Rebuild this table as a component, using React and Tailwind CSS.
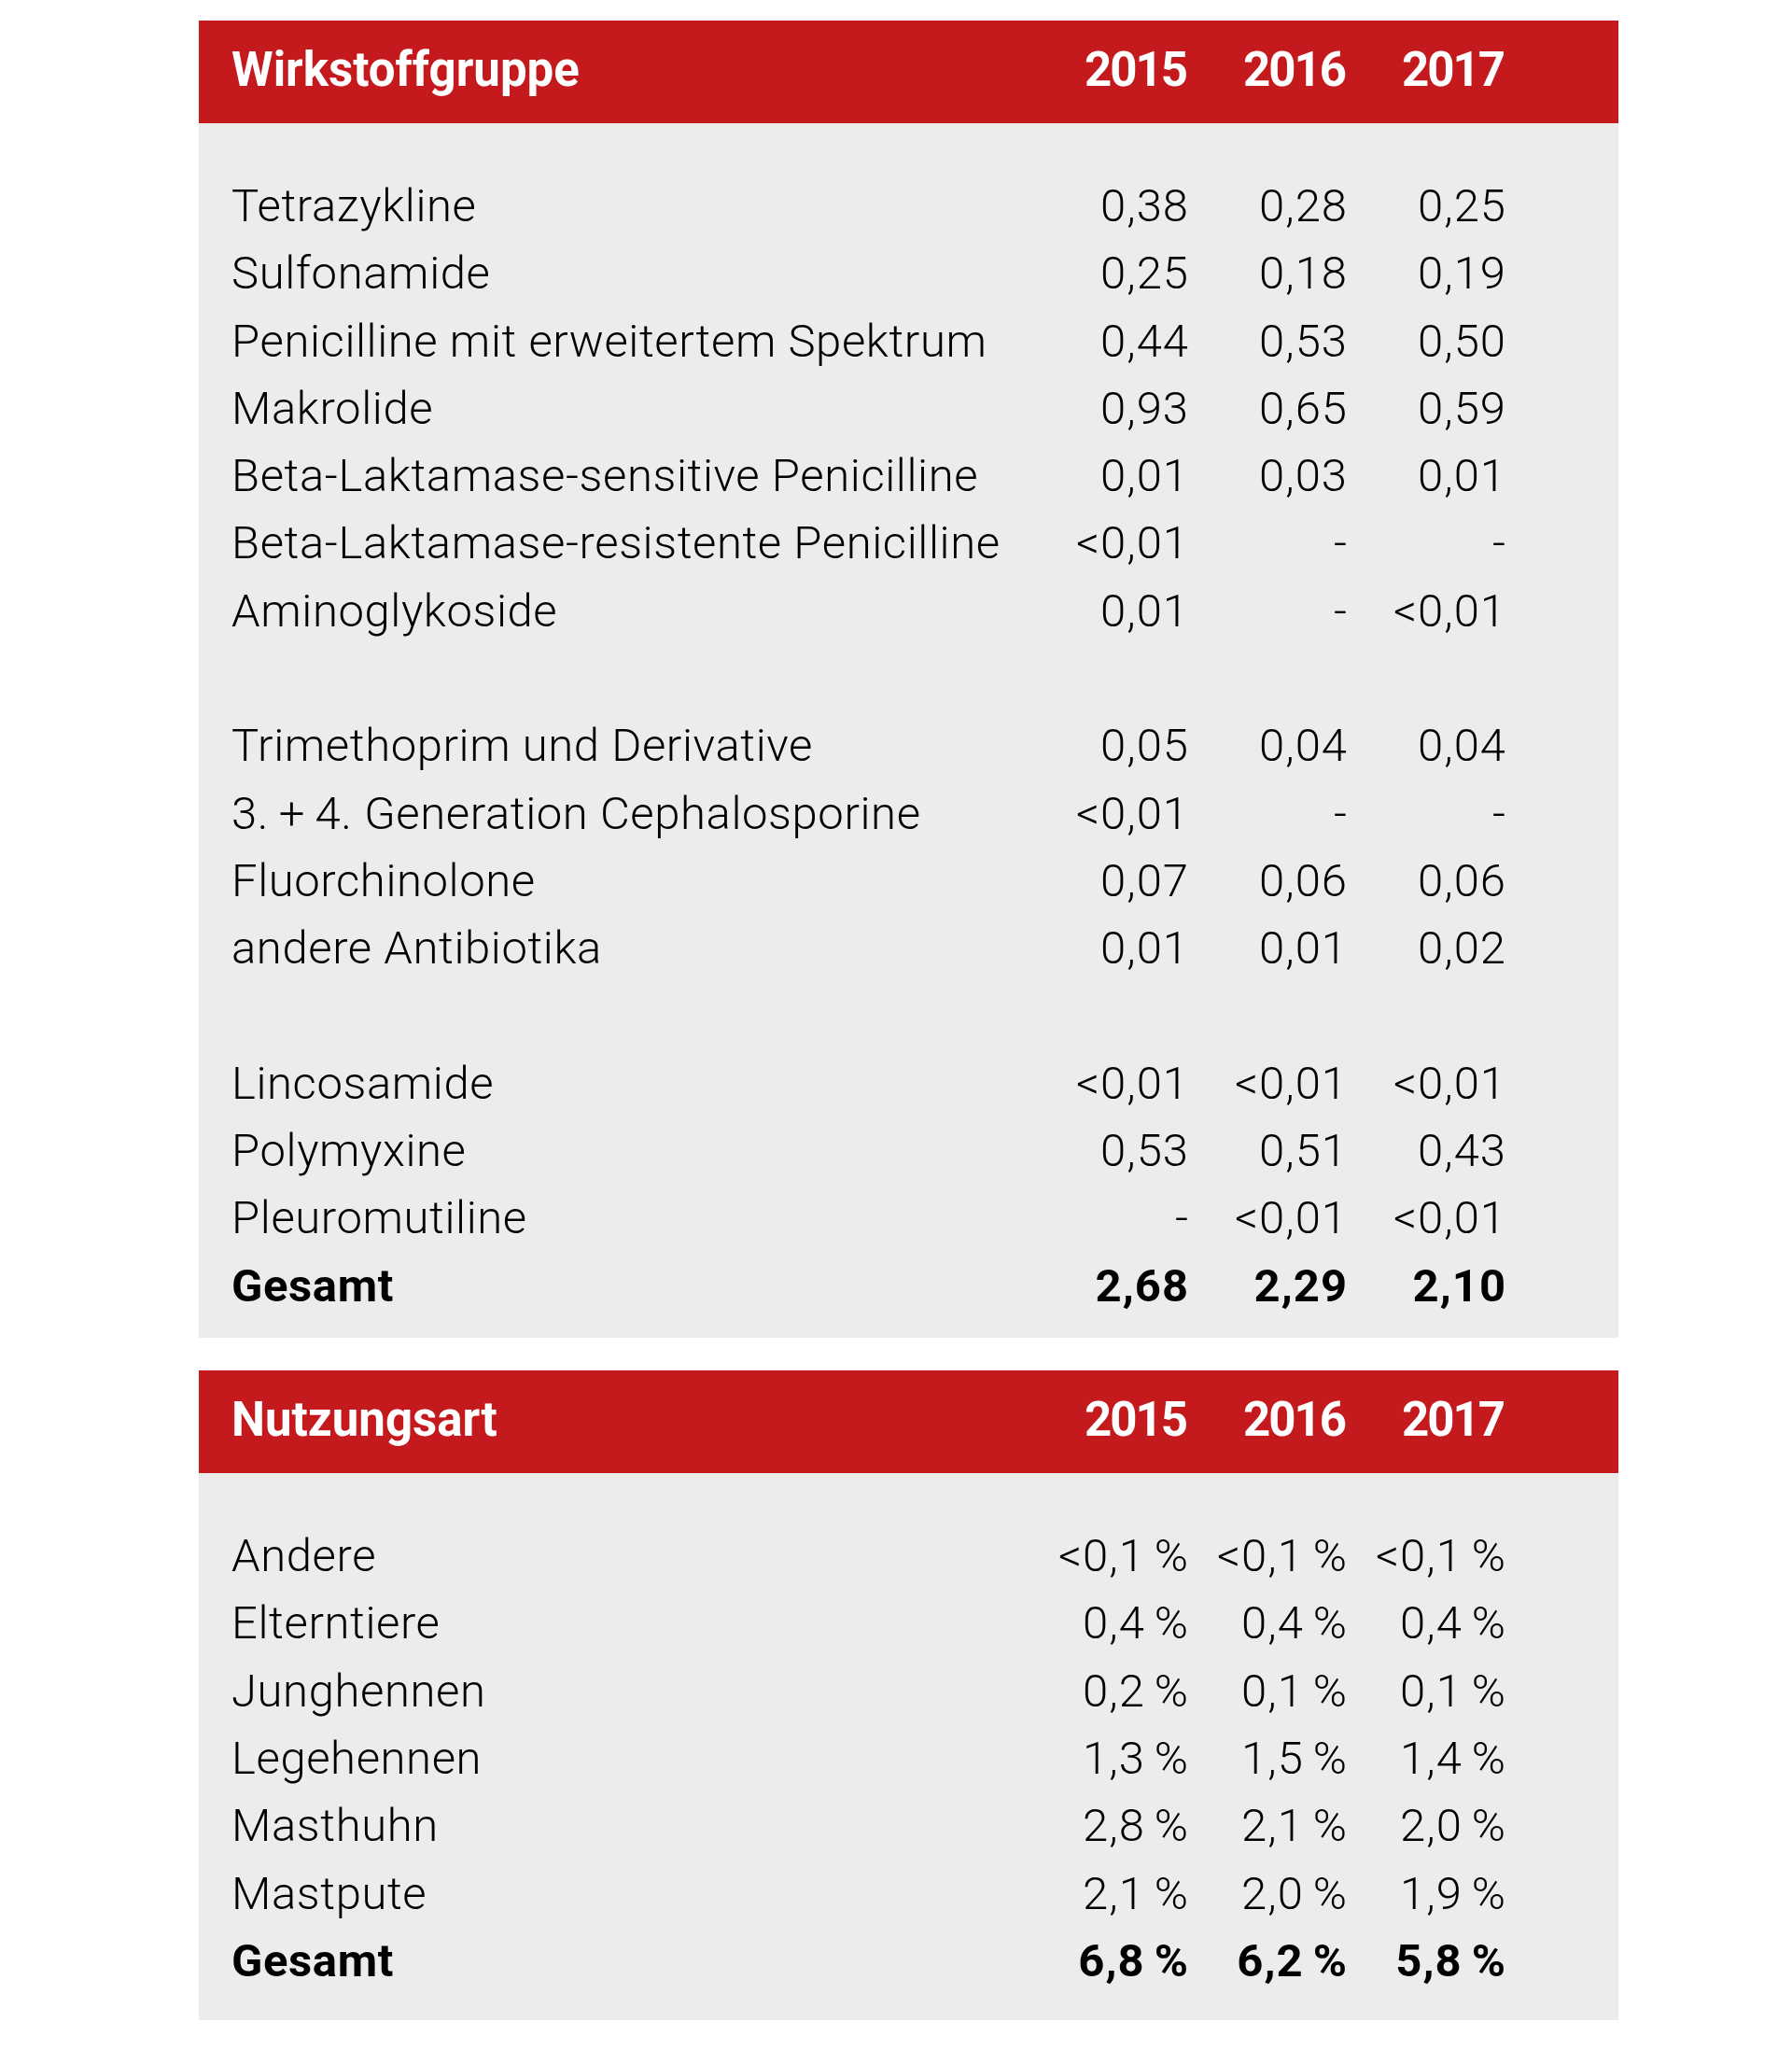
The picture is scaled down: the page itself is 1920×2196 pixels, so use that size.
const years = ["2015", "2016", "2017"];

const wirkstoffe = [
  ["Tetrazykline", "0,38", "0,28", "0,25"],
  ["Sulfonamide", "0,25", "0,18", "0,19"],
  ["Penicilline mit erweitertem Spektrum", "0,44", "0,53", "0,50"],
  ["Makrolide", "0,93", "0,65", "0,59"],
  ["Beta-Laktamase-sensitive Penicilline", "0,01", "0,03", "0,01"],
  ["Beta-Laktamase-resistente Penicilline", "<0,01", "-", "-"],
  ["Aminoglykoside", "0,01", "-", "<0,01"],
  null,
  ["Trimethoprim und Derivative", "0,05", "0,04", "0,04"],
  ["3.\u2009+\u20094. Generation Cephalosporine", "<0,01", "-", "-"],
  ["Fluorchinolone", "0,07", "0,06", "0,06"],
  ["andere Antibiotika", "0,01", "0,01", "0,02"],
  null,
  ["Lincosamide", "<0,01", "<0,01", "<0,01"],
  ["Polymyxine", "0,53", "0,51", "0,43"],
  ["Pleuromutiline", "-", "<0,01", "<0,01"],
];

const nutzung = [
  ["Andere", "<0,1 %", "<0,1 %", "<0,1 %"],
  ["Elterntiere", "0,4 %", "0,4 %", "0,4 %"],
  ["Junghennen", "0,2 %", "0,1 %", "0,1 %"],
  ["Legehennen", "1,3 %", "1,5 %", "1,4 %"],
  ["Masthuhn", "2,8 %", "2,1 %", "2,0 %"],
  ["Mastpute", "2,1 %", "2,0 %", "1,9 %"],
];

const grid = "grid grid-cols-[1fr_170px_170px_170px] pl-[35px] pr-[121px]";

function Row({ cells, bold }) {
  return (
    <div
      className={`${grid} h-[72.3px] items-center text-[49px] leading-[72.3px] text-black ${
        bold ? "font-bold" : "font-light"
      }`}
    >
      <span className="whitespace-nowrap tracking-[0.6px]">{cells[0]}</span>
      {cells.slice(1).map((v, i) => (
        <span
          key={i}
          className="text-right whitespace-nowrap tracking-[1px] [word-spacing:-3px] -mr-[1px]"
        >
          {v}
        </span>
      ))}
    </div>
  );
}

function DataTable({ label, rows, total, last }) {
  return (
    <div>
      {/* red header bar */}
      <div
        className={`${grid} h-[110px] items-center bg-[#c4191d] text-white font-bold text-[51px]`}
      >
        <span className="-mt-[4px]">{label}</span>
        {years.map((y) => (
          <span key={y} className="text-right -mt-[4px] tracking-[-2px] mr-[2px]">
            {y}
          </span>
        ))}
      </div>
      <div
        className={`bg-[#ececeb] pt-[53px] ${last ? "pb-[27px]" : "pb-[19px]"}`}
      >
        {rows.map((r, i) =>
          r ? <Row key={i} cells={r} /> : <div key={i} className="h-[72.3px]" />
        )}
        <Row cells={total} bold />
      </div>
    </div>
  );
}

export default function App() {
  return (
    <div
      className="min-h-screen bg-white pt-[22px] pb-[32px]"
      style={{ fontFamily: "Roboto, 'Liberation Sans', sans-serif" }}
    >
      <div className="ml-[213px] w-[1521px] flex flex-col gap-[35px]">
        <DataTable
          label="Wirkstoffgruppe"
          rows={wirkstoffe}
          total={["Gesamt", "2,68", "2,29", "2,10"]}
        />
        <DataTable
          label="Nutzungsart"
          rows={nutzung}
          total={["Gesamt", "6,8 %", "6,2 %", "5,8 %"]}
          last
        />
      </div>
    </div>
  );
}
